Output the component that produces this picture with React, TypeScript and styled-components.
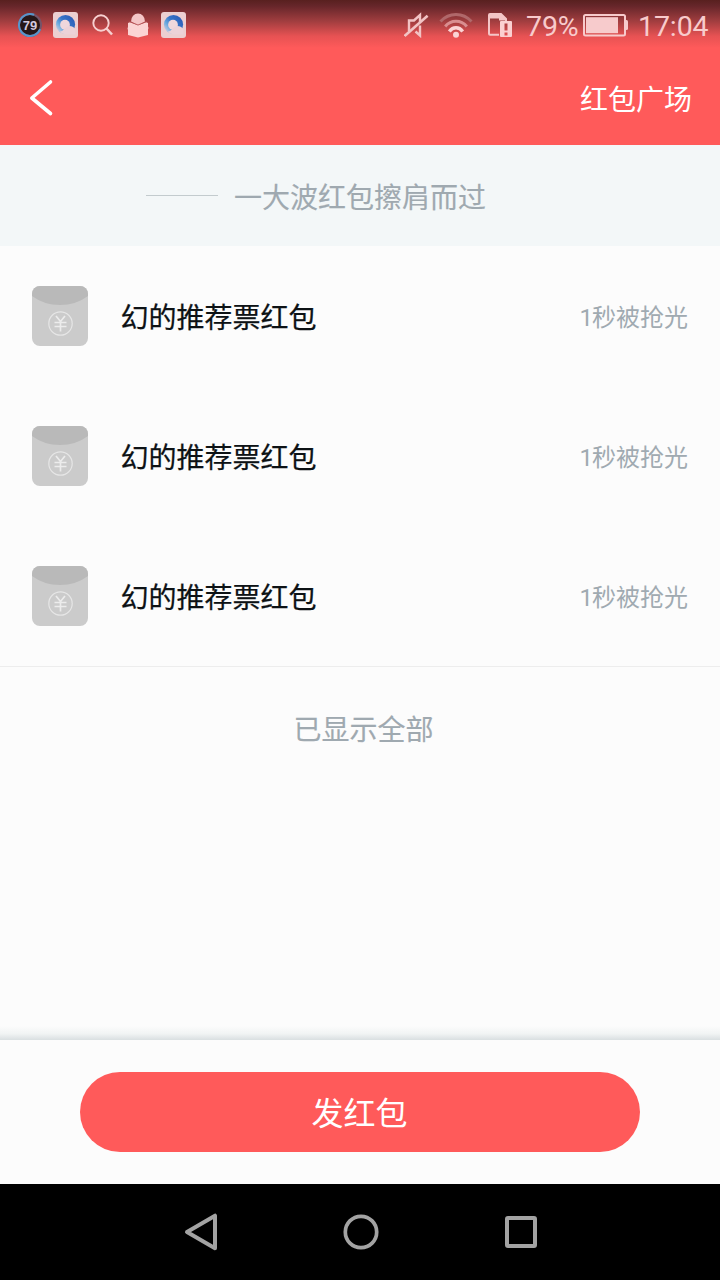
import React from "react";
import styled, { createGlobalStyle } from "styled-components";

const GlobalStyle = createGlobalStyle`
  * { box-sizing: border-box; }
  body {
    margin: 0;
    background: #fcfcfc;
    font-family: Roboto, "Noto Sans CJK SC", sans-serif;
  }
  svg { display: block; flex: none; }
`;

const Screen = styled.div`
  width: 720px;
  height: 1280px;
  display: flex;
  flex-direction: column;
  overflow: hidden;
  background: #fcfcfc;
`;

const Top = styled.header`
  height: 145px;
  flex: none;
  background: linear-gradient(#58201f 0, #66262a 6px, #a03d3f 21px, #e65253 36px, #ff5a5a 48px);
`;

const StatusBar = styled.div`
  height: 50px;
  display: flex;
  align-items: center;
  justify-content: space-between;
  padding: 0 12px 0 18px;
`;

const StatusGroup = styled.div`
  display: flex;
  align-items: center;
`;

const StatusText = styled.span<{ $width: number; $left: number }>`
  width: ${(p) => p.$width}px;
  margin-left: ${(p) => p.$left}px;
  padding-top: 3px;
  font-size: 28.500px;
  line-height: 48px;
  letter-spacing: -0.1px;
  white-space: nowrap;
  color: #f8cbcc;
`;

const Indicator = styled.div<{ $left: number }>`
  margin-left: ${(p) => p.$left}px;
`;

const TitleBar = styled.div`
  height: 95px;
  display: flex;
  align-items: center;
  justify-content: space-between;
  padding: 0 28px;
`;

const TitleLink = styled.span`
  padding-top: 7px;
  font-size: 28px;
  line-height: 40px;
  color: #fff;
`;

const Banner = styled.section`
  height: 101px;
  flex: none;
  display: flex;
  align-items: center;
  gap: 16px;
  padding-left: 146px;
  background: #f3f7f8;
`;

const Rule = styled.div`
  width: 72px;
  height: 1px;
  background: #c3cbce;
`;

const BannerText = styled.span`
  padding-top: 7px;
  font-size: 28px;
  line-height: 40px;
  color: #9fa9b0;
  -webkit-text-stroke: 0.15px #9fa9b0;
`;

const List = styled.ul`
  margin: 0;
  padding: 0;
  flex: none;
  list-style: none;
  border-bottom: 1px solid #ededed;
`;

const Row = styled.li`
  height: 140px;
  display: flex;
  align-items: center;
  padding: 0 32px;
`;

const RowTitle = styled.span`
  flex: 1;
  margin-left: 32.500px;
  padding-top: 5px;
  font-size: 28px;
  line-height: 40px;
  color: #0d1215;
  -webkit-text-stroke: 0.25px #0d1215;
`;

const RowNote = styled.span`
  padding-top: 4px;
  font-size: 24px;
  line-height: 36px;
  color: #a0aab1;
`;

const NoteLead = styled.span`
  letter-spacing: -1px;
`;

const EndNote = styled.div`
  flex: 1;
  padding: 44px 0 0 7px;
  text-align: center;
  font-size: 28px;
  line-height: 40px;
  color: #9fa9b0;
  -webkit-text-stroke: 0.15px #9fa9b0;
`;

const Shade = styled.div`
  height: 14px;
  flex: none;
  background: linear-gradient(#fcfcfc, #f1f4f4 55%, #d9dfe1);
`;

const Footer = styled.footer`
  height: 144px;
  flex: none;
  display: flex;
  align-items: flex-start;
  justify-content: center;
  padding-top: 32px;
`;

const SendButton = styled.button`
  width: 560px;
  height: 80px;
  padding: 4px 1px 0 0;
  border: 0;
  border-radius: 40px;
  background: #ff5a5a;
  color: #fff;
  font-family: inherit;
  font-size: 32px;
  line-height: 46px;
`;

const NavBar = styled.nav`
  height: 96px;
  flex: none;
  display: flex;
  align-items: center;
  justify-content: center;
  gap: 120px;
  padding-left: 1px;
  background: #000;
`;

const BatteryBadge = () => (
  <svg width="24" height="26" viewBox="0 0 24 26">
    <circle cx="12" cy="13" r="11" fill="#251719" stroke="#745469" strokeWidth="2" />
    <path d="M12 2A11 11 0 1 0 23 13" transform="rotate(22 12 13)" fill="none" stroke="#5795cb" strokeWidth="2" />
    <text x="12" y="17.500" textAnchor="middle" fontFamily="Liberation Sans, sans-serif" fontSize="13" fontWeight="700" fill="#d2c9df">79</text>
  </svg>
);

const BrowserLogo = ({ id }: { id: string }) => (
  <svg width="25" height="26" viewBox="0 0 25 26">
    <defs>
      <linearGradient id={id} x1="0.1" y1="0.9" x2="0.9" y2="0.2">
        <stop offset="0" stopColor="#d5d0e0" />
        <stop offset="0.3" stopColor="#69aadf" />
        <stop offset="0.6" stopColor="#3674c8" />
        <stop offset="1" stopColor="#2d5fb9" />
      </linearGradient>
    </defs>
    <rect width="25" height="26" rx="3" fill="#eccfd1" />
    <circle cx="12.500" cy="12.500" r="9.600" fill={`url(#${id})`} />
    <circle cx="12" cy="12.700" r="4.900" fill="#efd7dc" />
    <path d="M16 14Q21 14 22.500 18V22.500H14Q9 22 7 19.500Q10 19 11.500 16.500z" fill="#ecd2d8" />
  </svg>
);

const SearchIcon = () => (
  <svg width="21" height="22" viewBox="0 0 21 22" fill="none" stroke="#f7d0d0">
    <circle cx="9" cy="9" r="7.700" strokeWidth="1.900" />
    <path d="M14.500 14.500L20 20.500" strokeWidth="2.500" />
  </svg>
);

const ReaderIcon = () => (
  <svg width="22" height="26" viewBox="0 0 22 26">
    <path d="M4 9.500a7 8 0 0 1 14 0l-7 4z" fill="#f4c6c7" />
    <path d="M1 11l2-.8 8 3 8-3 2 .8v3.500q1 1.500 0 3V23l-10 2.500L1 23v-5q-1-1.500 0-3z" fill="#fbd4d4" />
    <path d="M2.500 9.500l8.500 3.500 8.500-3.500" fill="none" stroke="#b75457" strokeWidth="0.900" />
  </svg>
);

const MuteIcon = () => (
  <svg width="25" height="26" viewBox="0 0 25 26" fill="none" stroke="#f2c3c4" strokeWidth="2.400">
    <path d="M5 19V8.500H10L16 3v7" />
    <path d="M.6 24L23.600 3.800" strokeWidth="2.600" />
    <path d="M16 13.500V23.500L11.500 19.500" />
  </svg>
);

const WifiIcon = () => (
  <svg width="34" height="26" viewBox="0 0 34 26" fill="none" strokeWidth="3">
    <path d="M1.500 9.500Q8 2.500 17 2.500T32.500 9.500" stroke="#b0686a" />
    <path d="M6.200 14.500Q10.500 9.300 17 9.300T27.800 14.500" stroke="#d98e90" />
    <path d="M10.300 19.500Q13 15.800 17 15.800T23.700 19.500" stroke="#fbd4d5" strokeWidth="3.400" />
    <circle cx="17" cy="22.700" r="3" fill="#fbd4d5" />
  </svg>
);

const SimAlertIcon = () => (
  <svg width="24" height="24" viewBox="0 0 24 24">
    <path d="M11 21.800H2Q1 21.800 1 20.800V2Q1 1 2 1h11l5 5v2" fill="none" stroke="#f4c6c7" strokeWidth="2" />
    <path d="M2 1h11l5 4.500V7.500H11V5.500H2z" fill="#f4c6c7" />
    <path fillRule="evenodd" d="M13 8h10q1 0 1 1v14q0 1-1 1H13q-1 0-1-1V9q0-1 1-1zM16.500 10.500v7h3v-7zM16.500 19.500v3h3v-3z" fill="#fbd0d1" />
  </svg>
);

const BatteryIcon = () => (
  <svg width="45" height="23" viewBox="0 0 45 23">
    <rect x="1" y="1" width="41" height="20.500" rx="1.500" fill="none" stroke="#f7cbcc" strokeWidth="2" />
    <rect x="3" y="3.200" width="32" height="16" fill="#f7cbcc" />
    <path d="M42 6h1.500q1.500 0 1.500 1.500v7q0 1.500-1.500 1.500H42z" fill="#f7cbcc" />
  </svg>
);

const BackIcon = () => (
  <svg width="26" height="38" viewBox="0 0 26 38">
    <path d="M22.500 3L3.800 19 22.500 34.500" fill="none" stroke="#fff" strokeWidth="3.600" strokeLinecap="round" strokeLinejoin="round" />
  </svg>
);

const Envelope = ({ id }: { id: string }) => (
  <svg width="56" height="60" viewBox="0 0 56 60">
    <defs>
      <clipPath id={id}>
        <rect width="56" height="60" rx="8" />
      </clipPath>
    </defs>
    <g clipPath={`url(#${id})`}>
      <rect width="56" height="60" fill="#cbcbcb" />
      <path d="M0 0h56v10Q44 19 28 19T0 10z" fill="#b9b9b9" />
    </g>
    <circle cx="28.500" cy="37.500" r="11.700" fill="none" stroke="#e6e6e6" strokeWidth="1.200" />
    <path d="M24 30l4.500 5.500L33 30M28.500 35v10.500M22.500 36.500h12M22.500 40.500h12" fill="none" stroke="#ececec" strokeWidth="1.700" />
  </svg>
);

const NavBack = () => (
  <svg width="40" height="40" viewBox="0 0 40 40">
    <path d="M34 3.700V36.300L6 20z" fill="none" stroke="#a3a3a3" strokeWidth="4" strokeLinejoin="round" />
  </svg>
);

const NavHome = () => (
  <svg width="40" height="40" viewBox="0 0 40 40">
    <circle cx="20" cy="20" r="15.700" fill="none" stroke="#a3a3a3" strokeWidth="3.700" />
  </svg>
);

const NavRecent = () => (
  <svg width="40" height="40" viewBox="0 0 40 40">
    <rect x="6" y="6" width="28" height="28" rx="1" fill="none" stroke="#a3a3a3" strokeWidth="4" />
  </svg>
);

const packets = [
  { id: "packet-1", title: "幻的推荐票红包", seconds: 1 },
  { id: "packet-2", title: "幻的推荐票红包", seconds: 1 },
  { id: "packet-3", title: "幻的推荐票红包", seconds: 1 },
];

export default function App() {
  return (
    <Screen>
      <GlobalStyle />
      <Top>
        <StatusBar>
          <StatusGroup>
            <BatteryBadge />
            <Indicator $left={11}><BrowserLogo id="browser-a" /></Indicator>
            <Indicator $left={14}><SearchIcon /></Indicator>
            <Indicator $left={14}><ReaderIcon /></Indicator>
            <Indicator $left={12}><BrowserLogo id="browser-b" /></Indicator>
          </StatusGroup>
          <StatusGroup>
            <MuteIcon />
            <Indicator $left={10}><WifiIcon /></Indicator>
            <Indicator $left={15}><SimAlertIcon /></Indicator>
            <StatusText $left={14} $width={53}>79%</StatusText>
            <Indicator $left={4}><BatteryIcon /></Indicator>
            <StatusText $left={10} $width={70}>17:04</StatusText>
          </StatusGroup>
        </StatusBar>
        <TitleBar>
          <BackIcon />
          <TitleLink>红包广场</TitleLink>
        </TitleBar>
      </Top>
      <Banner>
        <Rule />
        <BannerText>一大波红包擦肩而过</BannerText>
      </Banner>
      <List>
        {packets.map((packet) => (
          <Row key={packet.id}>
            <Envelope id={packet.id} />
            <RowTitle>{packet.title}</RowTitle>
            <RowNote>
              <NoteLead>{packet.seconds}</NoteLead>秒被抢光
            </RowNote>
          </Row>
        ))}
      </List>
      <EndNote>已显示全部</EndNote>
      <Shade />
      <Footer>
        <SendButton>发红包</SendButton>
      </Footer>
      <NavBar>
        <NavBack />
        <NavHome />
        <NavRecent />
      </NavBar>
    </Screen>
  );
}
